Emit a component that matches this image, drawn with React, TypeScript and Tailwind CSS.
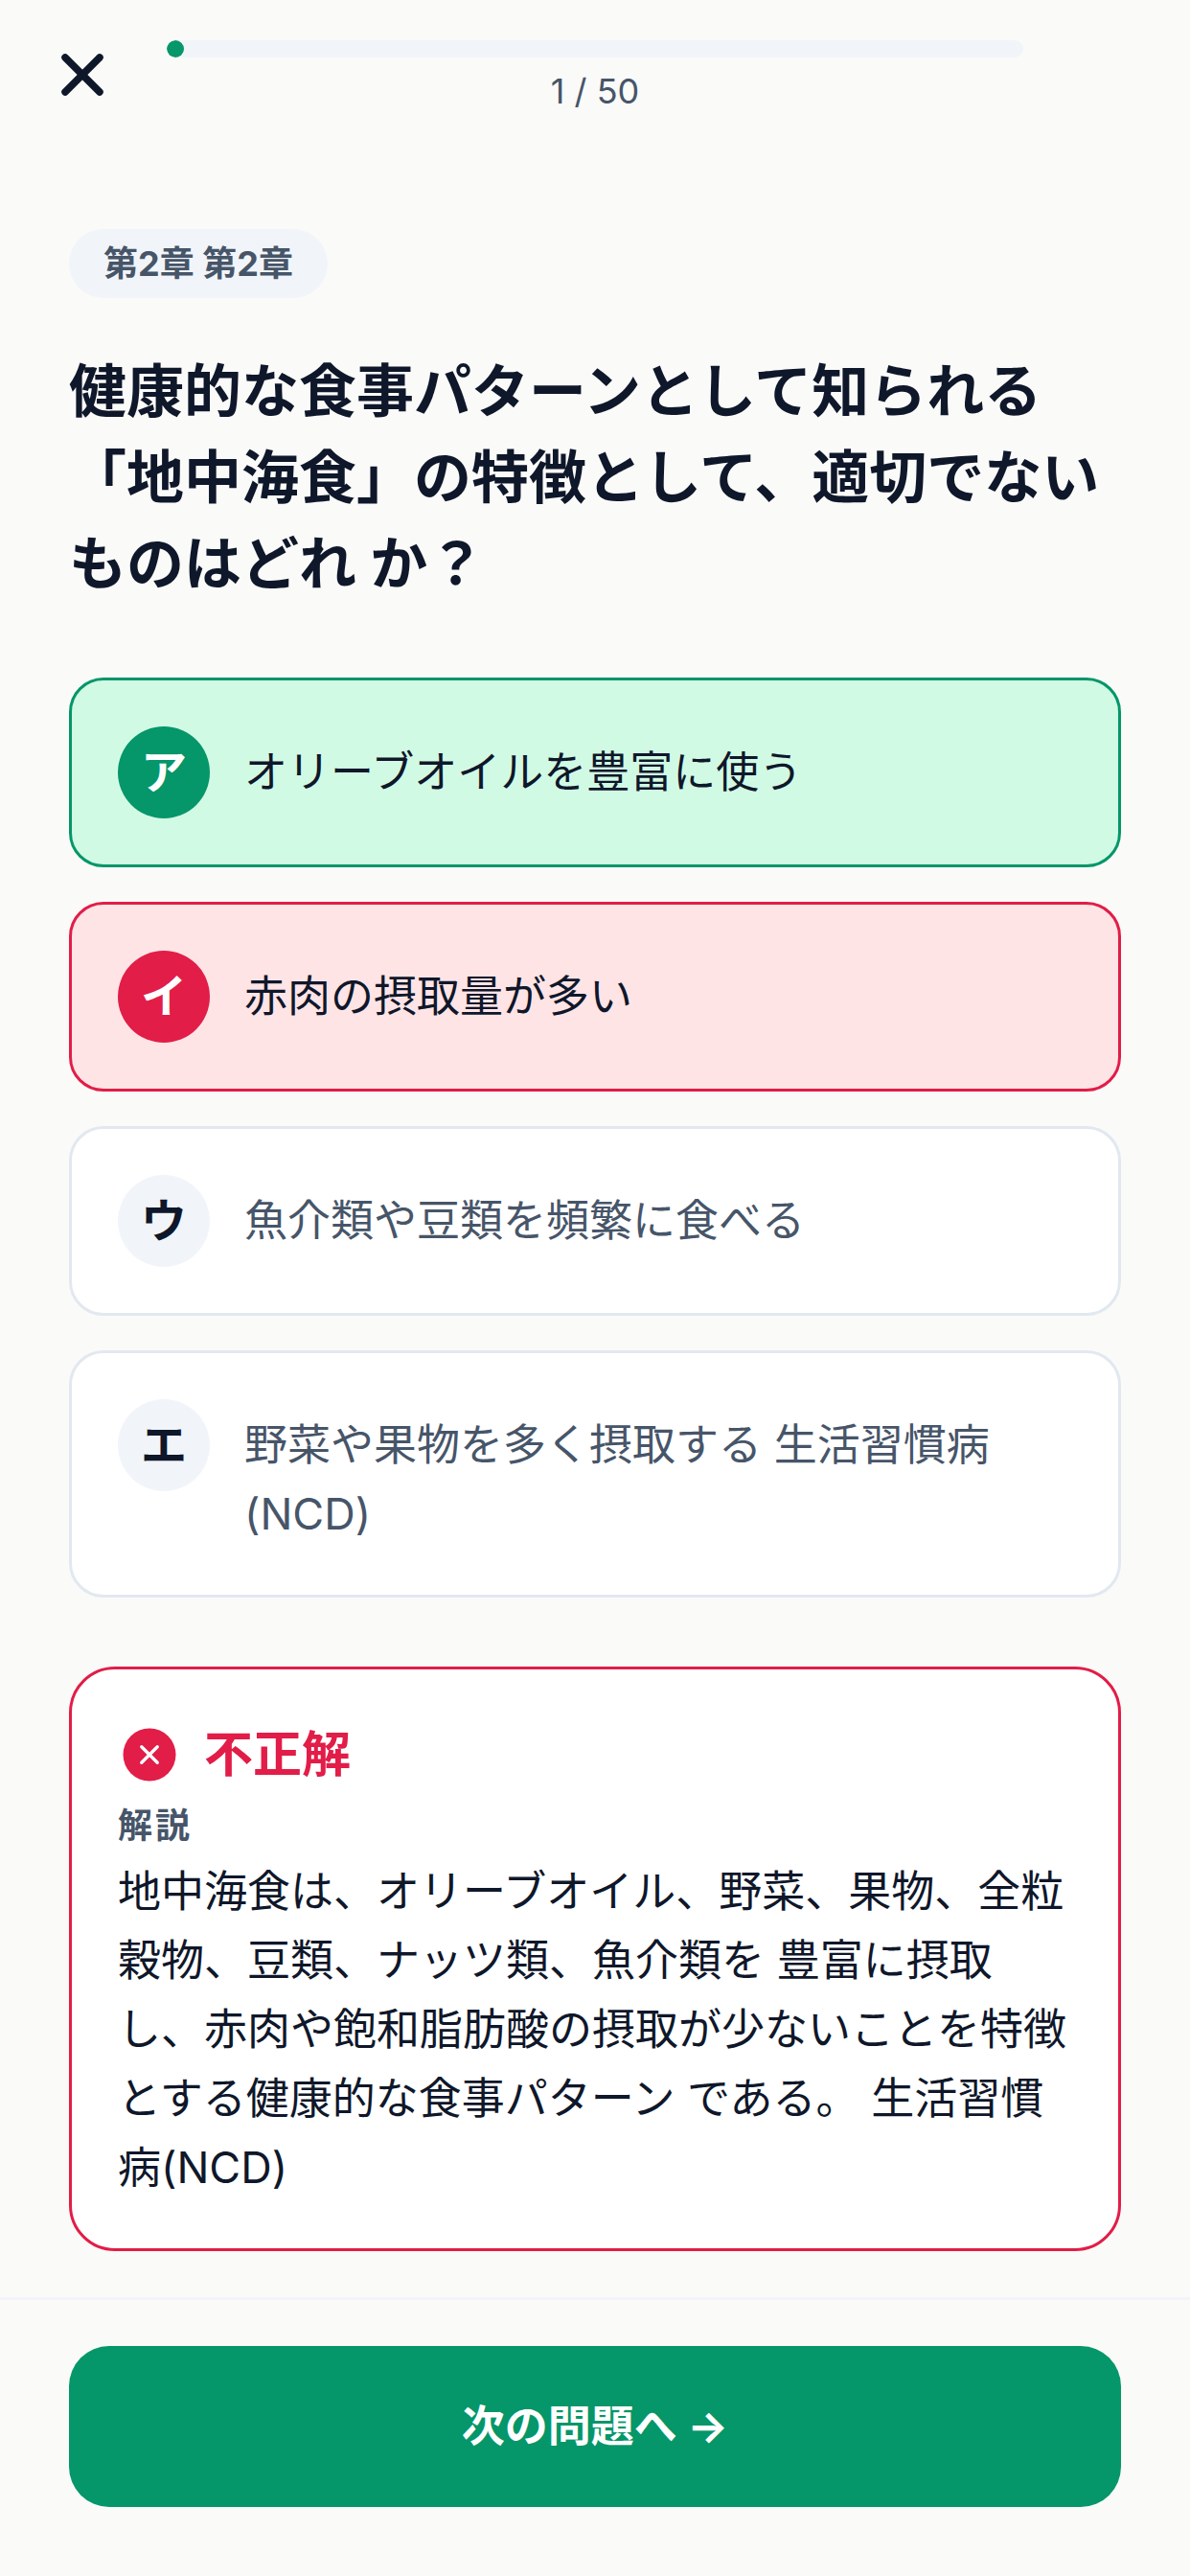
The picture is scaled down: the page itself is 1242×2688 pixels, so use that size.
import { X } from "lucide-react";

const FONT = "font-['Inter','Noto_Sans_CJK_JP',sans-serif]";

const OPTIONS = [
  { mark: "ア", text: "オリーブオイルを豊富に使う", state: "correct" },
  { mark: "イ", text: "赤肉の摂取量が多い", state: "wrong" },
  { mark: "ウ", text: "魚介類や豆類を頻繁に食べる", state: "idle" },
  { mark: "エ", text: "野菜や果物を多く摂取する 生活習慣病 (NCD)", state: "idle" },
];

function Option({ mark, text, state }: { mark: string; text: string; state: string }) {
  const box =
    state === "correct"
      ? "border-[#059669] bg-[#d1fae5] text-[#0f172a]"
      : state === "wrong"
        ? "border-[#e11d48] bg-[#ffe4e6] text-[#0f172a]"
        : "border-[#e2e8f0] bg-white text-[#475569]";
  const badge =
    state === "correct"
      ? "bg-[#059669] text-white"
      : state === "wrong"
        ? "bg-[#e11d48] text-white"
        : "bg-[#f1f5f9] text-[#0f172a]";

  return (
    <div className={`flex items-start gap-9 rounded-[36px] border-[3px] p-12 ${box}`}>
      <div className={`flex h-24 w-24 shrink-0 items-center justify-center rounded-full text-[48px] font-bold ${badge}`}>
        {mark}
      </div>
      <p className="min-w-0 flex-1 pt-3 text-[45px] leading-[72px]">{text}</p>
    </div>
  );
}

export default function App() {
  return (
    <div className={`flex h-[2688px] w-[1242px] flex-col overflow-hidden bg-[#fafaf8] ${FONT}`}>
      {/* Header */}
      <div className="flex items-start gap-[52px] pl-[50px] pr-[174px] pt-[42px]">
        <X size={72} strokeWidth={2.5} className="shrink-0 text-[#0f172a]" />
        <div className="flex-1">
          <div className="h-[18px] overflow-hidden rounded-full bg-[#f1f5f9]">
            <div className="h-full w-[2%] rounded-full bg-[#059669]" />
          </div>
          <p className="mt-[8px] text-center text-[36px] leading-[54px] text-[#475569]">1 / 50</p>
        </div>
      </div>

      {/* Question */}
      <div className="flex-1 px-[72px] pt-[117px]">
        <span className="inline-block rounded-full bg-[#f1f5f9] px-9 py-[9px] text-[36px] font-bold leading-[54px] text-[#475569]">
          第2章 第2章
        </span>
        <h1 className="mt-[52px] text-[60px] font-bold leading-[90px] text-[#0f172a]">
          健康的な食事パターンとして知られる「地中海食」の特徴として、適切でないものはどれ か？
        </h1>

        <div className="mt-[74px] flex flex-col gap-9">
          {OPTIONS.map((o) => (
            <Option key={o.mark} {...o} />
          ))}
        </div>

        {/* Explanation */}
        <div className="mt-[72px] rounded-[48px] border-[3px] border-[#e11d48] bg-white px-12 pb-12 pt-[48px]">
          <div className="flex items-center gap-6">
            <svg width="66" height="66" viewBox="0 0 24 24" className="shrink-0">
              <circle cx="12" cy="12" r="10" fill="#e11d48" />
              <path d="M15 9l-6 6M9 9l6 6" stroke="#fff" strokeWidth="1.2" strokeLinecap="round" />
            </svg>
            <span className="text-[51px] font-bold leading-[82px] text-[#e11d48]">不正解</span>
          </div>
          <p className="mt-[6px] text-[36px] font-bold leading-[54px] tracking-[3px] text-[#475569]">解説</p>
          <p className="mt-[6px] text-[45px] leading-[72px] text-[#0f172a]">
            地中海食は、オリーブオイル、野菜、果物、全粒穀物、豆類、ナッツ類、魚介類を 豊富に摂取し、赤肉や飽和脂肪酸の摂取が少ないことを特徴とする健康的な食事パターン である。 生活習慣病(NCD)
          </p>
        </div>
      </div>

      {/* Footer */}
      <div className="h-[291px] shrink-0 border-t-[3px] border-[#f1f5f9] px-[72px] pt-[48px]">
        <button className="flex h-[168px] w-full items-center justify-center rounded-[42px] bg-[#059669] text-[45px] font-bold text-white">
          次の問題へ →
        </button>
      </div>
    </div>
  );
}
